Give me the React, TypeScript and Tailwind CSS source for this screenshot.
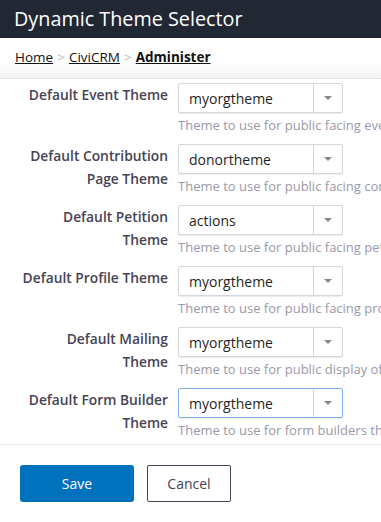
import React from "react";

const rows = [
  { label: "Default Event Theme", value: "myorgtheme", help: "Theme to use for public facing event pages" },
  { label: "Default Contribution Page Theme", value: "donortheme", help: "Theme to use for public facing contribution pages" },
  { label: "Default Petition Theme", value: "actions", help: "Theme to use for public facing petition pages" },
  { label: "Default Profile Theme", value: "myorgtheme", help: "Theme to use for public facing profile pages" },
  { label: "Default Mailing Theme", value: "myorgtheme", help: "Theme to use for public display of mailings" },
  { label: "Default Form Builder Theme", value: "myorgtheme", help: "Theme to use for form builders that are public", focus: true },
];

function Select({ value, focus }: { value: string; focus?: boolean }) {
  return (
    <div
      className={
        "flex h-[30px] w-[165px] items-stretch rounded-[2px] border bg-white shadow-[0_1px_1px_rgba(0,0,0,0.08)] " +
        (focus ? "border-[#7fb1e8]" : "border-[#d3d6dc]")
      }
    >
      <div className="flex flex-1 items-center pl-[10px] text-[14px] text-[#1f1f24]">{value}</div>
      <div className="flex w-[29px] items-center justify-center border-l border-[#d3d6dc]">
        <svg width="8" height="4" viewBox="0 0 8 4">
          <path d="M0 0 L8 0 L4 4 Z" fill="#888" />
        </svg>
      </div>
    </div>
  );
}

export default function App() {
  return (
    <div
      className="h-[522px] w-[381px] overflow-hidden bg-white"
      style={{ fontFamily: '"Open Sans", "Noto Sans", sans-serif' }}
    >
      <div className="flex h-[38px] items-center bg-[#222833] pl-[14px] text-[19.8px] text-white">
        Dynamic Theme Selector
      </div>
      <div className="flex h-[41px] items-center border-b border-[#e2e2e2] bg-gradient-to-b from-white from-60% to-[#f3f3f3] pb-[1px] pl-[15px] text-[13.5px] text-[#111]">
        <span className="underline">Home</span>
        <span className="mx-[4px] text-[#bbb]">&gt;</span>
        <span className="underline">CiviCRM</span>
        <span className="mx-[4px] text-[#bbb]">&gt;</span>
        <span className="font-bold underline">Administer</span>
      </div>
      <div className="border-b border-[#ebebeb] pt-[4px] pb-[4px]">
        {rows.map((r, i) => (
          <div key={i} className={"flex " + (i < rows.length - 1 ? "mb-[9px]" : "")}>
            <div className="w-[178px] shrink-0 pr-[10px]">
              <div className="ml-auto w-[148px] text-right text-[13.8px] font-semibold leading-[23px] text-[#464354]">
                {r.label}
              </div>
            </div>
            <div className="min-w-0 flex-1">
              <Select value={r.value} focus={r.focus} />
              <div className="mt-[3px] whitespace-nowrap text-[13px] leading-[19px] text-[#9a99a8]">{r.help}</div>
            </div>
          </div>
        ))}
      </div>
      <div className="flex gap-[13px] px-[20px] pt-[20px]">
        <button className="h-[37px] w-[114px] rounded-[3px] bg-[#0071bd] text-[14px] text-white">Save</button>
        <button className="h-[37px] w-[84px] rounded-[2px] border border-[#464354] bg-white text-[14px] text-[#464354]">
          Cancel
        </button>
      </div>
    </div>
  );
}
